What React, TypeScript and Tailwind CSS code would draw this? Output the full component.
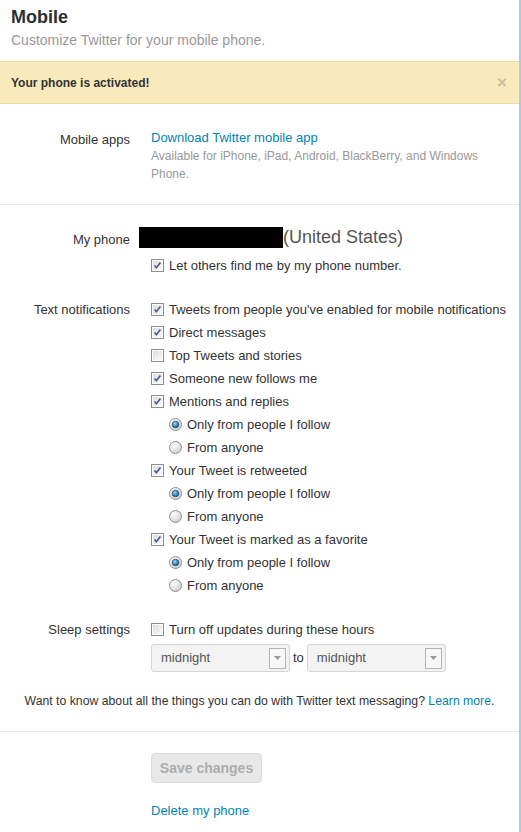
import React from "react";

const font = { fontFamily: '"Liberation Sans", Arial, sans-serif' };

function CheckBox({ checked }: { checked: boolean }) {
  return (
    <svg width="13" height="13" viewBox="0 0 13 13" className="shrink-0">
      <defs>
        <linearGradient id="cbFill" x1="0" y1="0" x2="1" y2="1">
          <stop offset="0" stopColor="#dcdcdc" />
          <stop offset="1" stopColor="#fbfbfb" />
        </linearGradient>
      </defs>
      <rect x="0.5" y="0.5" width="12" height="12" fill="#fff" stroke="#8e8f8f" />
      <rect x="2" y="2" width="9" height="9" fill="url(#cbFill)" />
      {checked && (
        <path d="M3.6 6.4 L5.4 8.7 L9.4 3.6" stroke="#4b5a98" strokeWidth="1.7" fill="none" />
      )}
    </svg>
  );
}

function Radio({ checked }: { checked: boolean }) {
  return (
    <svg width="13" height="13" viewBox="0 0 13 13" className="shrink-0">
      <defs>
        <radialGradient id="rbFill" cx="0.35" cy="0.3" r="0.75">
          <stop offset="0" stopColor="#ffffff" />
          <stop offset="1" stopColor="#cfcfcf" />
        </radialGradient>
        <radialGradient id="rbDot" cx="0.4" cy="0.35" r="0.65">
          <stop offset="0" stopColor="#9ad9ff" />
          <stop offset="1" stopColor="#0a5a96" />
        </radialGradient>
      </defs>
      <circle cx="6.5" cy="6.5" r="6" fill="url(#rbFill)" stroke="#8e8f8f" />
      {checked && <circle cx="6.5" cy="6.5" r="3.3" fill="url(#rbDot)" stroke="#23415e" strokeWidth="0.7" />}
    </svg>
  );
}

function CheckRow({ checked, label }: { checked: boolean; label: string }) {
  return (
    <div className="flex h-[23px] items-center gap-[5px]">
      <CheckBox checked={checked} />
      <span>{label}</span>
    </div>
  );
}

function RadioRow({ checked, label }: { checked: boolean; label: string }) {
  return (
    <div className="flex h-[23px] items-center gap-[5px] pl-[18px]">
      <Radio checked={checked} />
      <span>{label}</span>
    </div>
  );
}

function TimeSelect() {
  return (
    <div className="flex h-[28px] w-[139px] items-center justify-between rounded-[3px] border border-[#d4d4d4] bg-[#f3f3f3] pl-[9px] pr-[3px]">
      <span className="text-[#555]">midnight</span>
      <span className="flex h-[21px] w-[17px] items-center justify-center border border-[#b4b4b4] bg-[#f7f7f7]">
        <svg width="7" height="4" viewBox="0 0 7 4">
          <path d="M0 0 L7 0 L3.5 4 Z" fill="#9a9a9a" />
        </svg>
      </span>
    </div>
  );
}

export default function App() {
  return (
    <div style={font} className="min-h-[832px] w-[521px] bg-white">
      <div className="min-h-[832px] w-[521px] border-r-2 border-[#a7cde3] bg-white text-[13px] text-[#333]">
        {/* heading */}
        <div className="px-[11px] pb-[12px] pt-[6px]">
          <h1 className="text-[18px] font-bold leading-[22px] text-[#292f33]">Mobile</h1>
          <p className="mt-[3px] text-[14px] leading-[18px] text-[#999]">
            Customize Twitter for your mobile phone.
          </p>
        </div>

        {/* notice */}
        <div className="flex h-[43px] items-center justify-between border-y border-[#eddca6] bg-[#f9eabb] pl-[11px] pr-[12px]">
          <span className="text-[12px] font-bold text-[#333]">Your phone is activated!</span>
          <span className="text-[17px] font-bold leading-none text-[#c7bd9f]">×</span>
        </div>

        {/* apps */}
        <div className="grid grid-cols-[130px_1fr] gap-x-[21px] border-b border-[#e8e8e8] pb-[21px] pt-[25px]">
          <div className="mt-[2px] text-right leading-[18px]">Mobile apps</div>
          <div>
            <a className="block leading-[18px] text-[#0084b4]">Download Twitter mobile app</a>
            <p className="pr-[30px] text-[12px] leading-[18px] text-[#999]">
              Available for iPhone, iPad, Android, BlackBerry, and Windows Phone.
            </p>
          </div>
        </div>

        {/* settings */}
        <div className="border-b border-[#e8e8e8] pb-[21px] pt-[21px]">
          <div className="grid grid-cols-[130px_1fr] gap-x-[21px]">
            <div className="mt-[3px] text-right leading-[22px]">My phone</div>
            <div>
              <div className="flex h-[22px] items-center">
                <span className="ml-[-12px] h-[21px] w-[144px] bg-black" />
                <span className="text-[18px] leading-[22px] text-[#555]">(United States)</span>
              </div>
              <div className="mt-[6px]">
                <CheckRow checked label="Let others find me by my phone number." />
              </div>
            </div>
          </div>

          <div className="mt-[21px] grid grid-cols-[130px_1fr] gap-x-[21px]">
            <div className="text-right leading-[23px]">Text notifications</div>
            <div>
              <CheckRow checked label="Tweets from people you've enabled for mobile notifications" />
              <CheckRow checked label="Direct messages" />
              <CheckRow checked={false} label="Top Tweets and stories" />
              <CheckRow checked label="Someone new follows me" />
              <CheckRow checked label="Mentions and replies" />
              <RadioRow checked label="Only from people I follow" />
              <RadioRow checked={false} label="From anyone" />
              <CheckRow checked label="Your Tweet is retweeted" />
              <RadioRow checked label="Only from people I follow" />
              <RadioRow checked={false} label="From anyone" />
              <CheckRow checked label="Your Tweet is marked as a favorite" />
              <RadioRow checked label="Only from people I follow" />
              <RadioRow checked={false} label="From anyone" />
            </div>
          </div>

          <div className="mt-[21px] grid grid-cols-[130px_1fr] gap-x-[21px]">
            <div className="text-right leading-[23px]">Sleep settings</div>
            <div>
              <CheckRow checked={false} label="Turn off updates during these hours" />
              <div className="mt-[3px] flex items-center gap-[3px]">
                <TimeSelect />
                <span>to</span>
                <TimeSelect />
              </div>
            </div>
          </div>

          <p className="mt-[20px] text-center text-[12.25px] leading-[18px] text-[#333]">
            Want to know about all the things you can do with Twitter text messaging?{" "}
            <a className="text-[#0084b4]">Learn more</a>.
          </p>
        </div>

        {/* actions */}
        <div className="pl-[151px] pt-[21px]">
          <button
            disabled
            className="h-[30px] w-[111px] rounded-[4px] border border-[#dcdcdc] bg-[#e8e8e8] text-[14px] font-bold text-[#adadad]"
          >
            Save changes
          </button>
          <a className="mt-[19px] block leading-[18px] text-[#0084b4]">Delete my phone</a>
        </div>
      </div>
    </div>
  );
}
